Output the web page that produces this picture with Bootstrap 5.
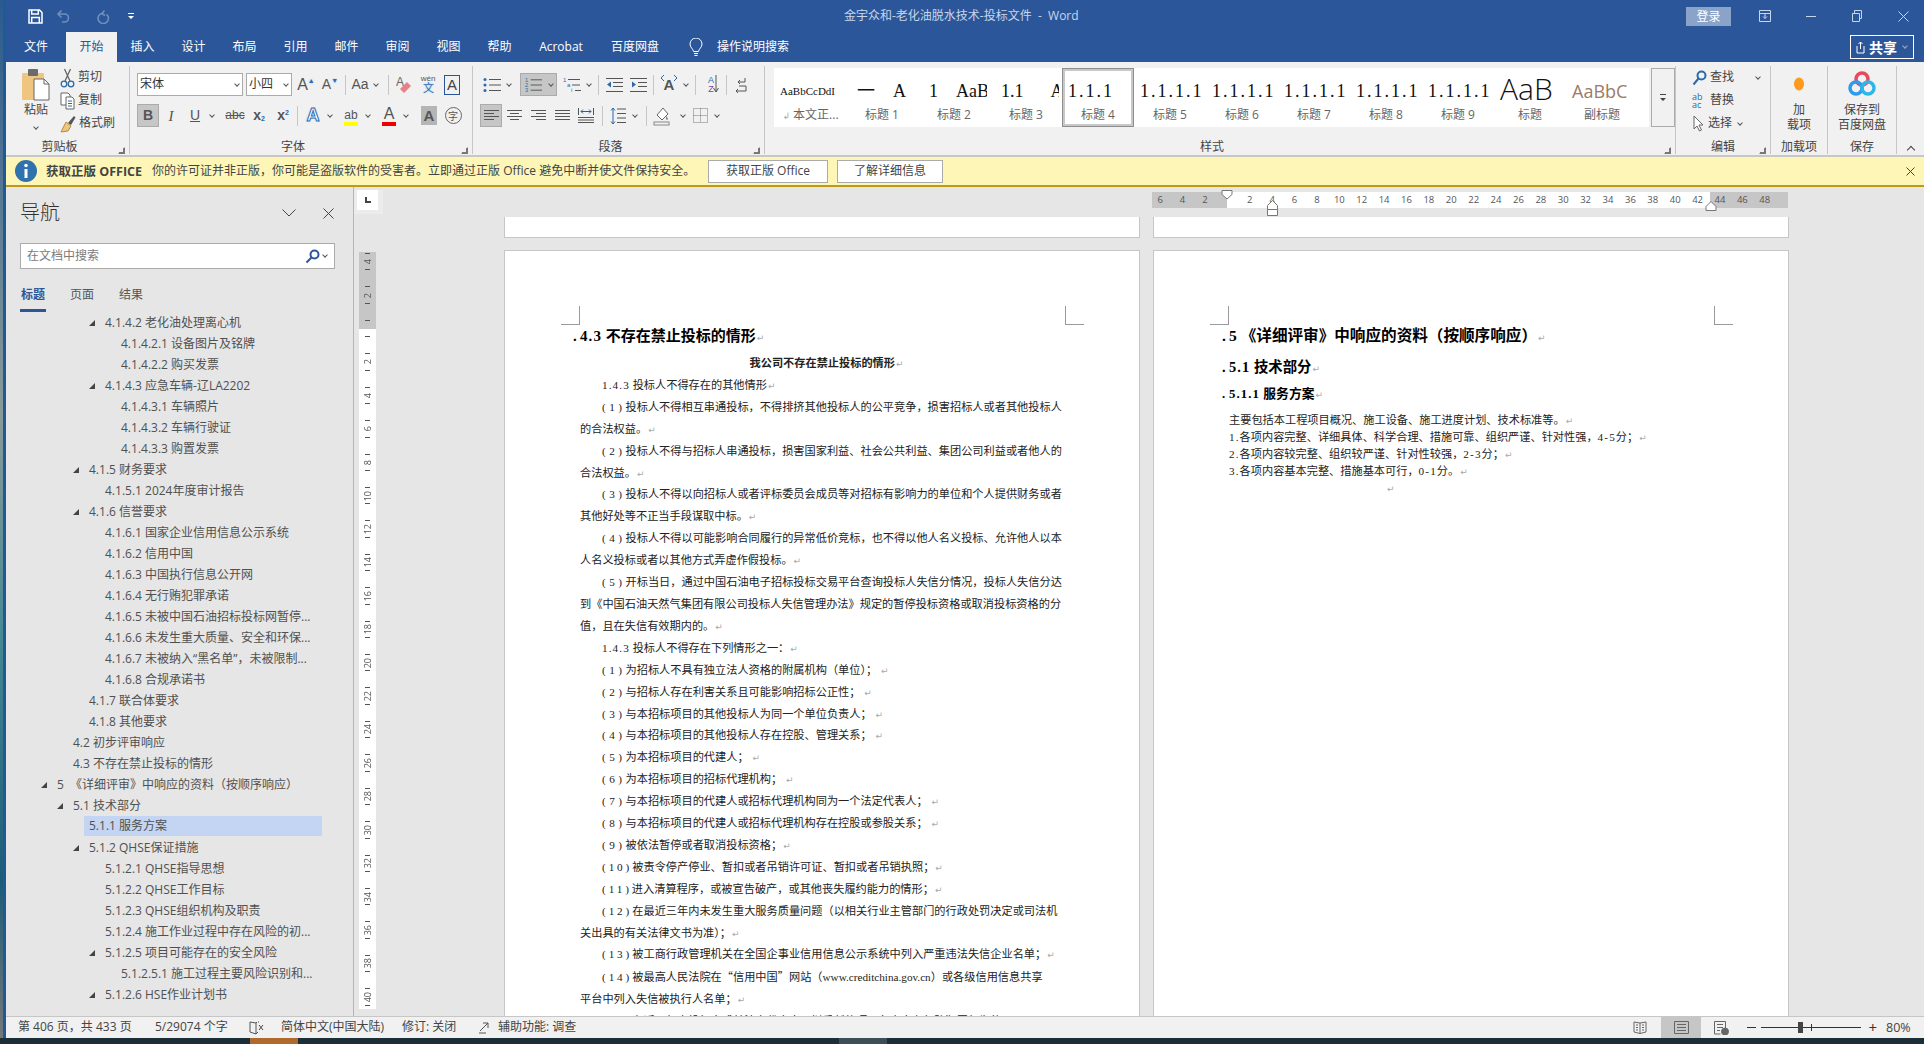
<!DOCTYPE html>
<html lang="zh-CN">
<head>
<meta charset="utf-8">
<title>金宇众和-老化油脱水技术-投标文件 - Word</title>
<link href="https://cdn.jsdelivr.net/npm/bootstrap@5.3.0/dist/css/bootstrap.min.css" rel="stylesheet">
<style>
html,body{height:100%;overflow:hidden}
body{background:#1c2f38;font:12px/1.2 "Open Sans","Noto Sans CJK SC",sans-serif;color:#444}
.shell{height:1038px}
.strip{width:3px;flex:none;background:linear-gradient(#2a5a8e,#8a9a98 40%,#4a8a94 60%,#1c5c78 85%,#777)}
.win{width:1921px;flex:none;border-left:3px solid #1f5a96;background:#e6e6e6;overflow:hidden}
.ttl{height:32px;background:#2b579a;color:#c9d6e9;flex:none}
.ttl-left{width:838px;padding-left:22px;flex:none}
.qa{width:15px;height:15px;flex:none}
.qa-undo{margin-left:13px}.qa-redo{margin-left:14px}.qa-more{margin-left:17px}
.login{width:45px;height:19px;background:#8aa3c8;color:#fff;margin-right:11px;line-height:19px;text-align:center}
.wb{width:46px;height:32px;flex:none}
.wlast{margin-right:-2px}
.tabs{height:30px;background:#2b579a;flex:none}
.tabs .nav-link{width:51px;height:30px;padding:0;line-height:30px;text-align:center;color:#fff;border-radius:0}
.tabs .nav-link.active{background:#f1f1f1;color:#2b579a}
.tabs .tab-file{width:60px}
.tabs .tab-ac{width:72px}
.tabs .tab-bd{width:76px}
.tell{color:#fff;margin-left:14px}
.share{width:64px;height:24px;border:1px solid #fff;color:#fff;margin-right:10px;font-size:14px;font-weight:600;border-radius:0;padding:0}
.rbn{height:95px;flex:none;background:#f1f1f1;border-bottom:2px solid #c6c6c6;padding:4px 0 1px;color:#444}
.gp{border-right:1px solid #c6c6c6;flex:none;display:flex;flex-direction:column;height:88px}
.gp-clip{width:124px}.gp-font{width:343px;padding:7px 0 0 7px}.gp-para{width:292px;padding:7px 0 0 7px}
.gp-style{width:911px;padding:2px 0 0 9px}.gp-edit{width:95px;padding-left:16px}.gp-add{width:57px}.gp-save{width:69px}
.glabel{height:14px;line-height:14px;margin-top:auto;display:flex;flex:none;color:#444}
.gp-font .glabel,.gp-para .glabel{margin-left:-7px}
.gp-style .glabel{margin-left:-9px}
.glabel span{flex:1;text-align:center}
.lau{width:16px;flex:none;display:flex;align-items:flex-end;justify-content:center}
.lau i{display:block;width:7px;height:7px;border:1px solid #777;border-top-color:transparent;border-left-color:transparent;box-shadow:inset -2px -2px 0 -1px #777}
.row23{height:23px}
.row23+.row23{margin-top:8px}
.tl{width:24px;height:23px;flex:none;display:inline-flex;align-items:center;justify-content:center;color:#555;font-family:"Liberation Sans",sans-serif;position:relative}
.t22{width:22px}
.on{background:#c6c6c6;border:1px solid #ababab}
.t37{width:37px;margin:0 3px 0 6px}
.cv{width:10px;height:23px;flex:none;display:inline-flex;align-items:center;justify-content:center}
.cv::before{content:"";width:4px;height:4px;border-right:1px solid #555;border-bottom:1px solid #555;transform:translateY(-1px) rotate(45deg)}
.sp{width:1px;height:20px;background:#c6c6c6;flex:none;margin:0 3px}
.gap6{margin-left:6px}.gap4{margin-left:4px}.gap7{margin-left:7px}
.fbox{height:23px;background:#fff;border:1px solid #ababab;display:flex;align-items:center;padding-left:2px;color:#333;flex:none}
.fname{width:106px}.fsize{width:46px;margin:0 2px 0 3px}
.fbox .cv{margin-left:auto}
.l16{font-size:16px}.l17{font-size:18px}.l14{font-size:14px}.bd{font-weight:700;font-size:14px}
.it{font-family:"Liberation Serif",serif;font-style:italic;font-size:15px}
.ul{text-decoration:underline}
.st{text-decoration:line-through;font-size:12px}
.sm{font-size:7px;line-height:1}
.cbar{position:absolute;left:5px;right:5px;bottom:1px;height:4px}
.blu{color:#2f6db5;text-shadow:0 0 2px #9cc4ee}
.clipc{width:36px;margin:2px 6px 0 12px}
.clipr{width:66px}
.mi{height:23px;display:flex;align-items:center;gap:3px;white-space:nowrap}
.pst{line-height:18px}
.gal{height:59px;background:#fff;display:flex;width:892px}
.gi{width:72px;flex:none;height:59px;border:3px solid transparent;padding:0 0 0 3px;overflow:hidden;white-space:nowrap}
.gi.sel{border-color:#c8c8c8;outline:1px solid #8e8e8e;outline-offset:-1px}
.gs{height:36px;line-height:40px;font-family:"Liberation Serif","Noto Sans CJK SC",serif;font-size:18px;color:#111;font-weight:400}
.gs.s12{font-size:11px}.gs.s15{font-size:18px;letter-spacing:2px;margin-right:-3px}
.gs.big{font:300 30px/36px "Open Sans",sans-serif}
.gs.sub{font:400 18px/40px "Open Sans",sans-serif;color:#9a7b66}
.gs.pad{padding-left:5px}
.gl{text-align:center;margin-left:-3px;line-height:16px;color:#666}
.gm{width:24px;flex:none;border:1px solid #ababab;background:#f1f1f1;margin-left:2px;display:flex;align-items:center;justify-content:center}
.cen{text-align:center;line-height:15px}
.ico36{height:36px;display:flex;align-items:center;justify-content:center}
.coll{flex:1;display:flex;align-items:flex-end;justify-content:center;padding:0 0 2px 0;color:#444;height:88px}
.coll i{width:6px;height:6px;border-left:1px solid #444;border-top:1px solid #444;transform:rotate(45deg);display:block;margin-bottom:-1px}
.ntc{height:30px;flex:none;background:#fdf6b6;border-bottom:2px solid #bd9b17;margin:0;padding:0 0 0 9px;border-radius:0;border-top:0;border-left:0;border-right:0;color:#444}
.ntc b{font-weight:700;color:#444;margin:0 10px 0 9px;font-size:12.5px}
.nmsg{width:556px;flex:none}
.nbt{height:23px;border:1px solid #ababab;background:#fff;border-radius:0;font-size:12px;padding:0;color:#444;flex:none}
.nb1{width:120px}.nb2{width:106px;margin-left:9px}
.nx{margin:0 9px 0 auto}
.mn{min-height:0}
.navp{width:348px;flex:none;border-right:1px solid #b5b5b5;background:#e6e6e6;padding-top:12px}
.navh{padding:0 19px 0 14px;height:28px}
.navh span{font-size:20px;font-weight:300;color:#333;line-height:28px}
.nclose{margin-left:27px}
.sbox{height:26px;margin:16px 18px 0 14px;background:#fff;border:1px solid #ababab;color:#7a7a7a;padding:0 4px 0 6px}
.ntabs{margin:16px 0 0 14px;gap:23px}
.ntabs .nav-link{padding:0 1px 4px;height:27px;line-height:20px;color:#555;border-bottom:3px solid transparent;border-radius:0;width:26px;text-align:center}
.ntabs .nav-link.active{color:#2b579a;font-weight:700;border-bottom-color:#2b579a}
.tree{background:transparent;border-radius:0}
.tree .list-group-item{background:transparent;border:0;border-radius:0;height:21px;line-height:21px;padding:0;color:#505050;white-space:nowrap;font-size:12px}
.tree .l1{padding-left:51px}.tree .l2{padding-left:67px}.tree .l3{padding-left:83px}.tree .l4{padding-left:99px}.tree .l5{padding-left:115px}
.tree .list-group-item.hit{background:#c3d5f2;margin-left:78px;width:238px;padding-left:5px;height:20px;line-height:20px;margin-top:0;margin-bottom:1px}
.tri{display:inline-block;width:6px;height:6px;background:#444;clip-path:polygon(100% 0,100% 100%,0 100%);margin-left:-16px;margin-right:10px;vertical-align:1px}
.vcol{width:30px;flex:none}
.corn{width:29px;height:24px;margin-top:3px;background:#ececec;padding:0 5px 4px 3px}
.corn div{background:#fff;height:20px;display:flex;align-items:center;justify-content:center}
.corn i{display:block;width:6px;height:6px;border-left:2px solid #444;border-bottom:2px solid #444}
.vtrk{width:17px;height:757px;margin:38px 0 0 5px;overflow:hidden;background:linear-gradient(#c6c6c6 77px,#fff 77px)}
.vtop{margin-top:-7px}
.vc{height:33.43px;padding:8px 0;display:flex;flex-direction:column;align-items:center;justify-content:space-between}
.vc::before,.vc::after{content:"";width:5px;height:1px;background:#555;flex:none}
.vc span{writing-mode:vertical-rl;transform:rotate(180deg);font:9px/9px "Open Sans",sans-serif;color:#555}
.dcol{min-width:0;overflow:hidden}
.hr{position:relative;width:636px;height:16px;margin:5px 0 0 768px;background:linear-gradient(90deg,#c6c6c6 75px,#fff 75px,#fff 558px,#c6c6c6 558px)}
.hnums{overflow:hidden;height:16px;display:flex;margin-left:-3px}
.hnums span{width:22.4px;flex:none;text-align:center;font:9.5px/16px "Open Sans",sans-serif;color:#555}
.mk{position:absolute;display:block}
.mk1{left:69px;top:-2px}.mk2{left:115px;top:8px}.mk3{left:553px;top:9px}
.pgs{margin:9px 0 0 120px;gap:13px}
.pc{width:636px;flex:none}
.frag{height:21px;background:#fff;border:solid #c6c6c6;border-width:0 1px 1px}
.pg{height:900px;margin-top:12px;background:#fff;border:1px solid #c6c6c6;padding:55px 55px 0 56px}
.crop{height:19px}
.crop i{display:block;width:19px;height:19px;border-bottom:1px solid #9a9a9a}
.crop .cl{border-right:1px solid #9a9a9a}
.crop .cr{border-left:1px solid #9a9a9a}
.wd{font-family:"Liberation Serif","Noto Sans CJK SC",serif;font-size:11.2px;color:#222;margin-left:19px;width:483px}
.wd p{margin:0;line-height:21.9px;text-indent:22px}
.rm{color:#a8a8a8;font:9px "DejaVu Sans",sans-serif;margin-left:1px}
.pn{letter-spacing:3.5px}
.pn2{letter-spacing:2.9px}
.lt{letter-spacing:1.1px}
.qt{font-family:"Noto Sans CJK SC",sans-serif}
.dh{font-family:"Liberation Serif","Noto Sans CJK SC",serif;font-weight:700;color:#000;margin:0}
.pm{display:inline-block;width:7px;margin-left:-7px;font-weight:700}
.dh1{font-size:15px;line-height:22px}
.dh0{font-size:15.6px;line-height:22px}
.dh2{font-size:14.4px;line-height:20px;margin-top:10px}
.dh3{font-size:12.8px;line-height:18px;margin-top:8px}
.wd .cap{text-indent:0;text-align:center;font-weight:700;margin:6px 0 0 10px}
.wd2{margin-top:9px;width:440px}
.wd2 p{line-height:16.9px;text-indent:0}
.wd2 .ctr{margin-left:157px}
.sbar{height:22px;flex:none;background:#f1f1f1;border-top:1px solid #c6c6c6;padding-left:12px;color:#444}
.s1{width:137px}.s2{width:94px}.s3{width:32px}.s4{width:121px}.s5{width:76px}
.sr{margin-left:auto}
.vw{width:40px;height:21px;display:flex;align-items:center;justify-content:center}
.vw.on2{background:#c6c6c6}
.vw0{margin-right:1px}
.vw9{margin-right:6px}
.sminus{width:9px;height:1px;background:#333;margin-right:0}
.sld{width:100px;height:1px;background:#333;margin:0 7px 0 5px;position:relative}
.sld i{position:absolute;left:37px;top:-5px;width:5px;height:11px;background:#444}
.sld b{position:absolute;left:50px;top:-3px;width:1px;height:7px;background:#333}
.splus{font-size:15px;line-height:1;margin-right:9px;color:#333}
.spct{width:38px;font-size:12.5px}
.tbar{height:6px;background:#1c2f38}
.tb1{width:48px;height:6px;background:#b06a30;margin-left:250px}
.tb2{width:48px;height:6px;background:#3e4e56;margin-left:541px}
</style>
</head>
<body>
<div class="shell d-flex">
<div class="strip"></div>
<div class="win d-flex flex-column">

<div class="ttl d-flex align-items-center">
 <div class="ttl-left d-flex align-items-center">
  <svg class="qa" viewBox="0 0 15 15" fill="none" stroke="#fff" stroke-width="1.5"><path d="M1 1h10.500L14 3.500V14H1zM3.700 1v4h6.600V1M3.700 14V8.500h7.600V14"/></svg>
  <svg class="qa qa-undo" viewBox="0 0 15 15" fill="none" stroke="#6f8fbb" stroke-width="1.600"><path d="M5.500 1.500 2 5l3.500 3.500M2 5h6.500a3.800 3.800 0 0 1 0 8H6"/></svg>
  <span class="cv" style="opacity:.35"></span>
  <svg class="qa qa-redo" viewBox="0 0 15 15" fill="none" stroke="#6f8fbb" stroke-width="1.600"><path d="M9.500 1.500 7 4.500l3 2M7 4.300a5.200 5.200 0 1 0 4.500 1"/></svg>
  <svg class="qa-more" width="8" height="8" viewBox="0 0 8 8" fill="#fff"><path d="M1 1h6v1H1zM1 4h6L4 7z"/></svg>
 </div>
 <span>金宇众和-老化油脱水技术-投标文件&nbsp; - &nbsp;Word</span>
 <div class="ms-auto d-flex align-items-center">
  <span class="login">登录</span>
  <span class="wb d-flex align-items-center justify-content-center"><svg width="12" height="12" fill="none" stroke="#c9d6e9"><path d="M.5.500h11v11H.5zM.5 3.500h11M6 3.500v5M4 6.500l2 2 2-2"/></svg></span>
  <span class="wb d-flex align-items-center justify-content-center"><svg width="10" height="10" stroke="#c9d6e9"><path d="M0 5.500h10"/></svg></span>
  <span class="wb d-flex align-items-center justify-content-center"><svg width="10" height="12" fill="none" stroke="#c9d6e9"><path d="M.5 3.500h7v8h-7zM2.500 3.500v-3h7v8h-2"/></svg></span>
  <span class="wb wlast d-flex align-items-center justify-content-center"><svg width="11" height="11" stroke="#c9d6e9"><path d="M.5.500l10 10M10.500.500l-10 10"/></svg></span>
 </div>
</div>

<div class="tabs d-flex align-items-center">
 <ul class="nav flex-nowrap">
  <li class="nav-item"><a class="nav-link tab-file">文件</a></li>
  <li class="nav-item"><a class="nav-link active">开始</a></li>
  <li class="nav-item"><a class="nav-link">插入</a></li>
  <li class="nav-item"><a class="nav-link">设计</a></li>
  <li class="nav-item"><a class="nav-link">布局</a></li>
  <li class="nav-item"><a class="nav-link">引用</a></li>
  <li class="nav-item"><a class="nav-link">邮件</a></li>
  <li class="nav-item"><a class="nav-link">审阅</a></li>
  <li class="nav-item"><a class="nav-link">视图</a></li>
  <li class="nav-item"><a class="nav-link">帮助</a></li>
  <li class="nav-item"><a class="nav-link tab-ac">Acrobat</a></li>
  <li class="nav-item"><a class="nav-link tab-bd">百度网盘</a></li>
 </ul>
 <svg class="ms-3" width="14" height="19" viewBox="0 0 14 19" fill="none" stroke="#fff"><path d="M4.500 13.500C4 10.500 1 9.500 1 6a6 6 0 0 1 12 0c0 3.500-3 4.500-3.500 7.500zM5 15.500h4M5.500 17.500h3"/></svg>
 <span class="tell">操作说明搜索</span>
 <button class="btn share ms-auto d-flex align-items-center justify-content-center gap-1">
  <svg width="9" height="14" viewBox="0 0 9 14" fill="none" stroke="#fff"><path d="M1 6v7h7V6M4.500 9V2M2.500 4l2-2 2 2"/></svg>共享<span class="cv" style="filter:invert(1);width:7px"></span>
 </button>
</div>

<div class="rbn d-flex">
 <div class="gp gp-clip">
  <div class="d-flex">
   <div class="clipc text-center">
    <svg width="30" height="33" viewBox="0 0 30 33"><rect x="1" y="5" width="22" height="27" rx="1" fill="#eec67f"/><rect x="7" y="1" width="10" height="7" rx="1" fill="#6b6b6b"/><path d="M13 11h10l5 5v16H13z" fill="#fff" stroke="#666"/><path d="M23 11v5h5" fill="none" stroke="#666"/></svg>
    <div class="pst">粘贴</div>
    <div class="cv" style="height:10px"></div>
   </div>
   <div class="clipr">
    <div class="mi"><svg width="15" height="20" viewBox="0 0 15 20" fill="none" stroke="#2b6aa8" stroke-width="1.300"><circle cx="4" cy="16" r="2.800"/><circle cx="11" cy="16" r="2.800"/><path d="M5 13 10.500 1M10 13 4.500 1" stroke="#666"/></svg><span>剪切</span></div>
    <div class="mi"><svg width="15" height="18" viewBox="0 0 15 18" fill="#fff" stroke="#666"><path d="M1 1h7l2 2v10H1z"/><path d="M6 5h6l2 2v10H6z"/><path d="M8 9h4M8 11.500h4M8 14h4" stroke="#2b6aa8"/></svg><span>复制</span></div>
    <div class="mi"><svg width="16" height="18" viewBox="0 0 16 18"><path d="M1 17 6 7l5 4-3 5z" fill="#eec67f" stroke="#b98a3c"/><path d="M8 8l6-7 1.500 1.500L11 10z" fill="#555"/></svg><span>格式刷</span></div>
   </div>
  </div>
  <div class="glabel"><span>剪贴板</span><div class="lau"><i></i></div></div>
 </div>

 <div class="gp gp-font">
  <div class="d-flex align-items-center row23">
   <div class="fbox fname">宋体<span class="cv"></span></div>
   <div class="fbox fsize">小四<span class="cv"></span></div>
   <span class="tl l16">A<span class="sm blu" style="margin-bottom:8px">▲</span></span>
   <span class="tl l14">A<span class="sm blu" style="margin-bottom:8px">▼</span></span>
   <span class="sp"></span>
   <span class="tl t22 l14">Aa</span><span class="cv"></span>
   <span class="sp gap7"></span>
   <span class="tl"><svg width="16" height="20" viewBox="0 0 16 20"><text x="0" y="11" font-size="12" fill="#666" font-family="Liberation Sans">A</text><path d="M4 14 11 7l4 4-7 7z" fill="#e8808a"/></svg></span>
   <span class="tl" style="flex-direction:column;line-height:1"><span class="sm" style="font-size:8px">wén</span><span class="blu" style="font-size:11px">文</span></span>
   <span class="tl"><span style="border:1px solid #2b579a;width:16px;height:20px;line-height:18px;text-align:center;font-size:15px;color:#444">A</span></span>
  </div>
  <div class="d-flex align-items-center row23">
   <span class="tl t22 on bd">B</span>
   <span class="tl it">I</span>
   <span class="tl l14 ul">U</span><span class="cv"></span>
   <span class="tl gap6 st">abc</span>
   <span class="tl bd">x<span class="sm" style="margin-top:6px;color:#2b6aa8">2</span></span>
   <span class="tl bd">x<span class="sm" style="margin-bottom:6px;color:#2b6aa8">2</span></span>
   <span class="sp" style="margin:0 3px 0 2px"></span>
   <span class="tl blu bd" style="font-size:18px;color:#fff;-webkit-text-stroke:1px #2f6db5">A</span><span class="cv"></span>
   <span class="tl gap4">ab<i class="cbar" style="background:#ff0"></i></span><span class="cv"></span>
   <span class="tl gap4 l16" style="align-items:flex-start">A<i class="cbar" style="background:#e00"></i></span><span class="cv"></span>
   <span class="tl gap6"><span style="background:#b5b5b5;width:16px;height:19px;line-height:19px;text-align:center;font-size:15px;font-weight:700;color:#555">A</span></span>
   <span class="tl"><span style="border:1px solid #666;border-radius:50%;width:17px;height:17px;line-height:15px;text-align:center;font-size:10px;font-family:'Noto Sans CJK SC'">字</span></span>
  </div>
  <div class="glabel"><span>字体</span><div class="lau"><i></i></div></div>
 </div>

 <div class="gp gp-para">
  <div class="d-flex align-items-center row23">
   <span class="tl"><svg width="18" height="16" viewBox="0 0 18 16"><g fill="#2b6aa8"><circle cx="2" cy="2.500" r="1.500"/><circle cx="2" cy="8" r="1.500"/><circle cx="2" cy="13.500" r="1.500"/></g><path d="M6 2.500h12M6 8h12M6 13.500h12" stroke="#555"/></svg></span><span class="cv"></span>
   <span class="tl on t37 justify-content-start ps-1"><svg width="18" height="16" viewBox="0 0 18 16"><g fill="#2b6aa8" font-size="6" font-family="Liberation Sans"><text x="0" y="5">1</text><text x="0" y="10">2</text><text x="0" y="15">3</text></g><path d="M6 2.500h12M6 8h12M6 13.500h12" stroke="#555"/></svg><span class="cv ms-1"></span></span>
   <span class="tl"><svg width="18" height="16" viewBox="0 0 18 16"><g fill="#2b6aa8" font-size="6" font-family="Liberation Sans"><text x="0" y="5">1</text><text x="4" y="10">a</text><text x="8" y="15">i</text></g><path d="M5 2.500h12M9 8h8M12 13.500h6" stroke="#555"/></svg></span><span class="cv"></span>
   <span class="sp gap4"></span>
   <span class="tl"><svg width="18" height="16" viewBox="0 0 18 16" fill="none" stroke="#555"><path d="M1 1.500h17M8 5.500h10M8 9.500h10M1 14.500h17"/><path d="M6 4.500 2 7.500l4 3z" fill="#2b6aa8" stroke="none"/></svg></span>
   <span class="tl"><svg width="18" height="16" viewBox="0 0 18 16" fill="none" stroke="#555"><path d="M1 1.500h17M9 5.500h9M9 9.500h9M1 14.500h17"/><path d="M3 4.500l4 3-4 3z" fill="#2b6aa8" stroke="none"/></svg></span>
   <span class="sp"></span>
   <span class="tl bd" style="font-size:15px;font-weight:700">A<svg class="mk" style="top:1px;left:3px" width="18" height="7" fill="none" stroke="#2b6aa8"><path d="M1 4l3-3M1 4l3 3M17 4l-3-3M17 4l-3 3"/></svg></span><span class="cv"></span>
   <span class="sp gap4"></span>
   <span class="tl" style="font-size:9px;line-height:1;flex-direction:column;color:#2b6aa8">A<span style="color:#7b3fa8">Z</span><svg class="mk" style="left:14px;top:2px" width="6" height="18" fill="none" stroke="#555"><path d="M3 0v17M.5 13 3 17l2.500-4"/></svg></span>
   <span class="sp"></span>
   <span class="tl"><svg width="14" height="16" viewBox="0 0 14 16" fill="none" stroke="#555"><path d="M10 1v4H3M5 3 3 5l2 2M4 9h7v5H1M3 12 1 14l2 2" /></svg></span>
  </div>
  <div class="d-flex align-items-center row23">
   <span class="tl t22 on"><svg width="15" height="13" stroke="#555"><path d="M0 1.500h15M0 4.500h10M0 7.500h15M0 10.500h10"/></svg></span>
   <span class="tl ms-0" style="margin-left:1px"><svg width="15" height="13" stroke="#555"><path d="M0 1.500h15M3 4.500h9M0 7.500h15M3 10.500h9"/></svg></span>
   <span class="tl"><svg width="15" height="13" stroke="#555"><path d="M0 1.500h15M5 4.500h10M0 7.500h15M5 10.500h10"/></svg></span>
   <span class="tl"><svg width="15" height="13" stroke="#555"><path d="M0 1.500h15M0 4.500h15M0 7.500h15M0 10.500h15"/></svg></span>
   <span class="tl"><svg width="16" height="17" viewBox="0 0 16 17" fill="none" stroke="#555"><path d="M.5 1v7M15.500 1v7M3 4.500h10M0 10.500h16M0 13h16M0 15.500h16"/><path d="M5 2.500 3 4.500l2 2M11 2.500l2 2-2 2" stroke="#2b6aa8"/></svg></span>
   <span class="sp gap4"></span>
   <span class="tl"><svg width="16" height="18" viewBox="0 0 16 18" fill="none" stroke="#555"><path d="M7 2h9M7 6.500h9M7 11h9M7 15.500h9"/><path d="M3 1v16M1 3.500 3 1l2 2.500M1 14.500 3 17l2-2.500" stroke="#2b6aa8"/></svg></span><span class="cv"></span>
   <span class="sp gap6"></span>
   <span class="tl"><svg width="18" height="20" viewBox="0 0 18 20"><path d="M4 9l6-7 5 6-6 6z" fill="#fff" stroke="#666"/><path d="M13 10s2 2 2 3-2 1-2 0 0-3 0-3z" fill="#888"/><rect x="1" y="16" width="15" height="3" fill="#f1f1f1" stroke="#888"/></svg></span><span class="cv gap4"></span>
   <span class="tl"><svg width="15" height="15" fill="none" stroke="#777" stroke-dasharray="1 1"><path d="M.5.500h14v14H.5zM.5 7.500h14M7.500.500v14"/></svg></span><span class="cv"></span>
  </div>
  <div class="glabel"><span>段落</span><div class="lau"><i></i></div></div>
 </div>

 <div class="gp gp-style">
  <div class="d-flex">
  <div class="gal">
   <div class="gi"><div class="gs s12">AaBbCcDdI</div><div class="gl"><span class="rm">↲</span> 本文正...</div></div>
   <div class="gi"><div class="gs pad">一&emsp;A</div><div class="gl">标题 1</div></div>
   <div class="gi"><div class="gs pad">1&emsp;AaB</div><div class="gl">标题 2</div></div>
   <div class="gi"><div class="gs pad">1.1&emsp;&ensp;A</div><div class="gl">标题 3</div></div>
   <div class="gi sel"><div class="gs s15">1.1.1</div><div class="gl">标题 4</div></div>
   <div class="gi"><div class="gs s15">1.1.1.1</div><div class="gl">标题 5</div></div>
   <div class="gi"><div class="gs s15">1.1.1.1</div><div class="gl">标题 6</div></div>
   <div class="gi"><div class="gs s15">1.1.1.1</div><div class="gl">标题 7</div></div>
   <div class="gi"><div class="gs s15">1.1.1.1</div><div class="gl">标题 8</div></div>
   <div class="gi"><div class="gs s15">1.1.1.1</div><div class="gl">标题 9</div></div>
   <div class="gi"><div class="gs big">AaB</div><div class="gl">标题</div></div>
   <div class="gi"><div class="gs sub">AaBbC</div><div class="gl">副标题</div></div>
   <div class="flex-grow-1"></div>
  </div>
  <div class="gm"><svg width="8" height="10" fill="#444"><path d="M1 1h6v1H1zM1 5h6L4 8z"/></svg></div>
  </div>
  <div class="glabel"><span>样式</span><div class="lau"><i></i></div></div>
 </div>

 <div class="gp gp-edit">
  <div class="mi"><svg width="15" height="16" viewBox="0 0 15 16" fill="none" stroke="#2b6aa8" stroke-width="2"><circle cx="9.500" cy="5.500" r="4"/><path d="M6.500 8.500 1.500 14.500"/></svg><span>查找</span><span class="cv ms-3"></span></div>
  <div class="mi"><span style="font-size:9px;line-height:8px;color:#2b6aa8;width:15px">ab<br>ac</span><span>替换</span></div>
  <div class="mi"><svg width="13" height="17" viewBox="0 0 13 17" fill="#fff" stroke="#666"><path d="M2 1v13l3-3 2.500 5 2-1-2.500-5H11z"/></svg><span>选择</span><span class="cv"></span></div>
  <div class="glabel"><span>编辑</span><div class="lau"><i></i></div></div>
 </div>

 <div class="gp gp-add">
  <div class="ico36"><svg width="12" height="16" viewBox="0 0 12 16"><ellipse cx="6" cy="8" rx="5" ry="6.500" fill="#ff9a1e"/></svg></div>
  <div class="cen">加<br>载项</div>
  <div class="glabel"><span>加载项</span></div>
 </div>

 <div class="gp gp-save">
  <div class="ico36"><svg width="28" height="28" viewBox="0 0 28 28" fill="none" stroke-width="3.500"><circle cx="14" cy="9" r="6" stroke="#e8495b"/><circle cx="8" cy="18" r="6" stroke="#2f9bea"/><circle cx="20" cy="18" r="6" stroke="#2fb6e8"/></svg></div>
  <div class="cen">保存到<br>百度网盘</div>
  <div class="glabel"><span>保存</span></div>
 </div>
 <div class="coll"><i></i></div>
</div>

<div class="alert ntc d-flex align-items-center">
 <svg width="22" height="22" viewBox="0 0 22 22" class="flex-none"><circle cx="11" cy="11" r="11" fill="#2f72ad"/><rect x="9.500" y="9" width="3" height="9" fill="#fff"/><circle cx="11" cy="5.500" r="1.800" fill="#fff"/></svg>
 <b>获取正版 OFFICE</b>
 <span class="nmsg">你的许可证并非正版，你可能是盗版软件的受害者。立即通过正版 Office 避免中断并使文件保持安全。</span>
 <button class="btn nbt nb1">获取正版 Office</button>
 <button class="btn nbt nb2">了解详细信息</button>
 <svg class="nx" width="9" height="9" stroke="#444"><path d="M.5.500l8 8M8.500.500l-8 8"/></svg>
</div>

<div class="mn d-flex flex-grow-1 overflow-hidden">
 <aside class="navp">
  <div class="navh d-flex align-items-center">
   <span class="me-auto">导航</span>
   <svg width="14" height="8" fill="none" stroke="#444"><path d="M.5.500l6.500 6.500L13.500.500"/></svg>
   <svg class="nclose" width="11" height="11" stroke="#444"><path d="M.5.500l10 10M10.500.500l-10 10"/></svg>
  </div>
  <div class="sbox d-flex align-items-center">
   <span class="me-auto">在文档中搜索</span>
   <svg width="15" height="15" viewBox="0 0 15 15" fill="none" stroke="#2b579a" stroke-width="2"><circle cx="9.500" cy="5.500" r="4"/><path d="M6.500 8.500 1.500 13.500"/></svg>
   <span class="cv"></span>
  </div>
  <ul class="nav ntabs">
   <li class="nav-item"><a class="nav-link active">标题</a></li>
   <li class="nav-item"><a class="nav-link">页面</a></li>
   <li class="nav-item"><a class="nav-link">结果</a></li>
  </ul>
  <ul class="list-group tree">
   <li class="list-group-item l4"><i class="tri"></i>4.1.4.2 老化油处理离心机</li>
   <li class="list-group-item l5">4.1.4.2.1 设备图片及铭牌</li>
   <li class="list-group-item l5">4.1.4.2.2 购买发票</li>
   <li class="list-group-item l4"><i class="tri"></i>4.1.4.3 应急车辆-辽LA2202</li>
   <li class="list-group-item l5">4.1.4.3.1 车辆照片</li>
   <li class="list-group-item l5">4.1.4.3.2 车辆行驶证</li>
   <li class="list-group-item l5">4.1.4.3.3 购置发票</li>
   <li class="list-group-item l3"><i class="tri"></i>4.1.5 财务要求</li>
   <li class="list-group-item l4">4.1.5.1 2024年度审计报告</li>
   <li class="list-group-item l3"><i class="tri"></i>4.1.6 信誉要求</li>
   <li class="list-group-item l4">4.1.6.1 国家企业信用信息公示系统</li>
   <li class="list-group-item l4">4.1.6.2 信用中国</li>
   <li class="list-group-item l4">4.1.6.3 中国执行信息公开网</li>
   <li class="list-group-item l4">4.1.6.4 无行贿犯罪承诺</li>
   <li class="list-group-item l4">4.1.6.5 未被中国石油招标投标网暂停...</li>
   <li class="list-group-item l4">4.1.6.6 未发生重大质量、安全和环保...</li>
   <li class="list-group-item l4">4.1.6.7 未被纳入“黑名单”，未被限制...</li>
   <li class="list-group-item l4">4.1.6.8 合规承诺书</li>
   <li class="list-group-item l3">4.1.7 联合体要求</li>
   <li class="list-group-item l3">4.1.8 其他要求</li>
   <li class="list-group-item l2">4.2 初步评审响应</li>
   <li class="list-group-item l2">4.3 不存在禁止投标的情形</li>
   <li class="list-group-item l1"><i class="tri"></i>5 &nbsp;《详细评审》中响应的资料（按顺序响应）</li>
   <li class="list-group-item l2"><i class="tri"></i>5.1 技术部分</li>
   <li class="list-group-item hit">5.1.1 服务方案</li>
   <li class="list-group-item l3"><i class="tri"></i>5.1.2 QHSE保证措施</li>
   <li class="list-group-item l4">5.1.2.1 QHSE指导思想</li>
   <li class="list-group-item l4">5.1.2.2 QHSE工作目标</li>
   <li class="list-group-item l4">5.1.2.3 QHSE组织机构及职责</li>
   <li class="list-group-item l4">5.1.2.4 施工作业过程中存在风险的初...</li>
   <li class="list-group-item l4"><i class="tri"></i>5.1.2.5 项目可能存在的安全风险</li>
   <li class="list-group-item l5">5.1.2.5.1 施工过程主要风险识别和...</li>
   <li class="list-group-item l4"><i class="tri"></i>5.1.2.6 HSE作业计划书</li>
  </ul>
 </aside>

 <div class="vcol">
  <div class="corn"><div><i></i></div></div>
  <div class="vtrk"><div class="vtop">
   <div class="vc"><span>4</span></div><div class="vc"><span>2</span></div><div class="vc"><span></span></div>
   <div class="vc"><span>2</span></div><div class="vc"><span>4</span></div><div class="vc"><span>6</span></div><div class="vc"><span>8</span></div>
   <div class="vc"><span>10</span></div><div class="vc"><span>12</span></div><div class="vc"><span>14</span></div><div class="vc"><span>16</span></div>
   <div class="vc"><span>18</span></div><div class="vc"><span>20</span></div><div class="vc"><span>22</span></div><div class="vc"><span>24</span></div>
   <div class="vc"><span>26</span></div><div class="vc"><span>28</span></div><div class="vc"><span>30</span></div><div class="vc"><span>32</span></div>
   <div class="vc"><span>34</span></div><div class="vc"><span>36</span></div><div class="vc"><span>38</span></div><div class="vc"><span>40</span></div>
  </div></div>
 </div>

 <div class="dcol flex-grow-1">
  <div class="hr">
   <div class="hnums"><span>6</span><span>4</span><span>2</span><span></span><span>2</span><span>4</span><span>6</span><span>8</span><span>10</span><span>12</span><span>14</span><span>16</span><span>18</span><span>20</span><span>22</span><span>24</span><span>26</span><span>28</span><span>30</span><span>32</span><span>34</span><span>36</span><span>38</span><span>40</span><span>42</span><span>44</span><span>46</span><span>48</span></div>
   <svg class="mk mk1" width="12" height="10" fill="#fff" stroke="#777"><path d="M1 .5h10v4L6 9 1 4.500z"/></svg>
   <svg class="mk mk2" width="11" height="17" fill="#fff" stroke="#777"><path d="M5.500.5l5 5v4h-10v-4zM.5 9.500h10v6h-10z"/></svg>
   <svg class="mk mk3" width="12" height="10" fill="#fff" stroke="#777"><path d="M6 .5l5 5v4H1v-4z"/></svg>
  </div>
  <div class="pgs d-flex">
   <div class="pc">
    <div class="frag"></div>
    <div class="pg">
     <div class="crop d-flex justify-content-between"><i class="cl"></i><i class="cr"></i></div>
     <div class="wd">
      <h2 class="dh dh1"><span class="pm">.</span><span class="lt">4.3</span> 不存在禁止投标的情形<span class="rm">↵</span></h2>
      <p class="cap">我公司不存在禁止投标的情形<span class="rm">↵</span></p>
      <p><span class="lt">1.4.3</span> 投标人不得存在的其他情形<span class="rm">↵</span></p>
      <p><span class="pn">(1)</span>投标人不得相互串通投标，不得排挤其他投标人的公平竞争，损害招标人或者其他投标人的合法权益。<span class="rm">↵</span></p>
      <p><span class="pn">(2)</span>投标人不得与招标人串通投标，损害国家利益、社会公共利益、集团公司利益或者他人的合法权益。<span class="rm">↵</span></p>
      <p><span class="pn">(3)</span>投标人不得以向招标人或者评标委员会成员等对招标有影响力的单位和个人提供财务或者其他好处等不正当手段谋取中标。<span class="rm">↵</span></p>
      <p><span class="pn">(4)</span>投标人不得以可能影响合同履行的异常低价竞标，也不得以他人名义投标、允许他人以本人名义投标或者以其他方式弄虚作假投标。<span class="rm">↵</span></p>
      <p><span class="pn">(5)</span>开标当日，通过中国石油电子招标投标交易平台查询投标人失信分情况，投标人失信分达到《中国石油天然气集团有限公司投标人失信管理办法》规定的暂停投标资格或取消投标资格的分值，且在失信有效期内的。<span class="rm">↵</span></p>
      <p><span class="lt">1.4.3</span> 投标人不得存在下列情形之一：<span class="rm">↵</span></p>
      <p><span class="pn">(1)</span>为招标人不具有独立法人资格的附属机构（单位）； <span class="rm">↵</span></p>
      <p><span class="pn">(2)</span>与招标人存在利害关系且可能影响招标公正性； <span class="rm">↵</span></p>
      <p><span class="pn">(3)</span>与本招标项目的其他投标人为同一个单位负责人； <span class="rm">↵</span></p>
      <p><span class="pn">(4)</span>与本招标项目的其他投标人存在控股、管理关系； <span class="rm">↵</span></p>
      <p><span class="pn">(5)</span>为本招标项目的代建人； <span class="rm">↵</span></p>
      <p><span class="pn">(6)</span>为本招标项目的招标代理机构； <span class="rm">↵</span></p>
      <p><span class="pn">(7)</span>与本招标项目的代建人或招标代理机构同为一个法定代表人； <span class="rm">↵</span></p>
      <p><span class="pn">(8)</span>与本招标项目的代建人或招标代理机构存在控股或参股关系； <span class="rm">↵</span></p>
      <p><span class="pn">(9)</span>被依法暂停或者取消投标资格；<span class="rm">↵</span></p>
      <p><span class="pn2">(10)</span>被责令停产停业、暂扣或者吊销许可证、暂扣或者吊销执照；<span class="rm">↵</span></p>
      <p><span class="pn2">(11)</span>进入清算程序，或被宣告破产，或其他丧失履约能力的情形；<span class="rm">↵</span></p>
      <p><span class="pn2">(12)</span>在最近三年内未发生重大服务质量问题（以相关行业主管部门的行政处罚决定或司法机关出具的有关法律文书为准）；<span class="rm">↵</span></p>
      <p><span class="pn2">(13)</span>被工商行政管理机关在全国企事业信用信息公示系统中列入严重违法失信企业名单；<span class="rm">↵</span></p>
      <p><span class="pn2">(14)</span>被最高人民法院在<span class="qt">“</span>信用中国<span class="qt">”</span>网站（www.creditchina.gov.cn）或各级信用信息共享<br>平台中列入失信被执行人名单；<span class="rm">↵</span></p>
      <p><span class="pn2">(15)</span>在近三年内投标人或其法定代表人、拟委任的项目负责人有行贿犯罪行为的。 <span class="rm">↵</span></p>
     </div>
    </div>
   </div>
   <div class="pc">
    <div class="frag"></div>
    <div class="pg">
     <div class="crop d-flex justify-content-between"><i class="cl"></i><i class="cr"></i></div>
     <div class="wd">
      <h1 class="dh dh0"><span class="pm">.</span>5 《详细评审》中响应的资料（按顺序响应）<span class="rm">↵</span></h1>
      <h2 class="dh dh2"><span class="pm">.</span><span class="lt">5.1</span> 技术部分<span class="rm">↵</span></h2>
      <h3 class="dh dh3"><span class="pm">.</span><span class="lt">5.1.1</span> 服务方案<span class="rm">↵</span></h3>
      <div class="wd wd2 ms-0">
       <p>主要包括本工程项目概况、施工设备、施工进度计划、技术标准等。<span class="rm">↵</span></p>
       <p><span class="lt">1.</span>各项内容完整、详细具体、科学合理、措施可靠、组织严谨、针对性强，<span class="lt">4-5</span>分；<span class="rm">↵</span></p>
       <p><span class="lt">2.</span>各项内容较完整、组织较严谨、针对性较强，<span class="lt">2-3</span>分；<span class="rm">↵</span></p>
       <p><span class="lt">3.</span>各项内容基本完整、措施基本可行，<span class="lt">0-1</span>分。<span class="rm">↵</span></p>
       <p class="ctr"><span class="rm">↵</span></p>
      </div>
     </div>
    </div>
   </div>
  </div>
 </div>
</div>

<footer class="sbar d-flex align-items-center">
 <span class="s1">第 406 页，共 433 页</span>
 <span class="s2">5/29074 个字</span>
 <span class="s3"><svg width="15" height="14" viewBox="0 0 15 14" fill="none" stroke="#555"><path d="M7 2 1 1v10l6 2zM7 2l1-1M9 1h1M9 11l-2 2"/><path d="M10 4l4 5M14 4l-4 5" stroke="#444"/></svg></span>
 <span class="s4">简体中文(中国大陆)</span>
 <span class="s5">修订: 关闭</span>
 <span class="d-flex align-items-center gap-2"><svg width="12" height="13" viewBox="0 0 12 13" fill="none" stroke="#555"><path d="M2 10 10 2M5 2h5v5M1 12h7"/></svg>辅助功能: 调查</span>
 <div class="sr d-flex align-items-center">
  <span class="vw vw0"><svg width="14" height="13" fill="none" stroke="#666"><path d="M7 2 1 1v10l6 1.500L13 11V1zM7 2v10.500M3 4h2M3 6.500h2M3 9h2M9 4h2M9 6.500h2M9 9h2"/></svg></span>
  <span class="vw on2"><svg width="15" height="13" fill="none" stroke="#666"><path d="M.5.500h14v12H.5zM3 3.500h9M3 6.500h9M3 9.500h9"/></svg></span>
  <span class="vw vw9"><svg width="15" height="14" fill="none" stroke="#666"><path d="M.5.500h11v9M.5.500V13h6M3 3.500h6M3 6.500h6M3 9.500h3"/><circle cx="11" cy="10.500" r="3.500" fill="#666"/></svg></span>
  <span class="sminus"></span>
  <span class="sld"><i></i><b></b></span>
  <span class="splus">+</span>
  <span class="spct">80%</span>
 </div>
</footer>
</div>
</div>
<div class="tbar d-flex"><div class="tb1"></div><div class="tb2"></div></div>
</body>
</html>
